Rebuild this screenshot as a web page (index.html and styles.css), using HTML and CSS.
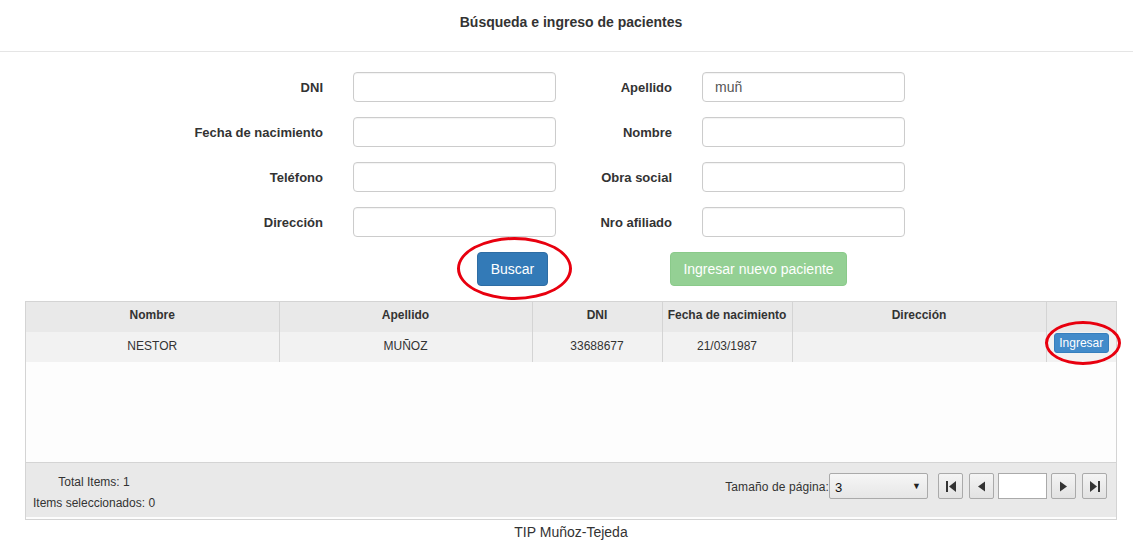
FILE: index.html
```html
<!DOCTYPE html>
<html lang="es">
<head>
<meta charset="utf-8">
<title>Búsqueda e ingreso de pacientes</title>
<link rel="stylesheet" href="styles.css">
</head>
<body>
<header class="top">
  <h1 class="title">Búsqueda e ingreso de pacientes</h1>
</header>

<form class="search">
  <label class="lbl">DNI</label>
  <input class="field" type="text">
  <label class="lbl">Apellido</label>
  <input class="field" type="text" value="muñ">

  <label class="lbl">Fecha de nacimiento</label>
  <input class="field" type="text">
  <label class="lbl">Nombre</label>
  <input class="field" type="text">

  <label class="lbl">Teléfono</label>
  <input class="field" type="text">
  <label class="lbl">Obra social</label>
  <input class="field" type="text">

  <label class="lbl">Dirección</label>
  <input class="field" type="text">
  <label class="lbl">Nro afiliado</label>
  <input class="field" type="text">
</form>

<div class="actions">
  <button class="btn btn-primary" type="button">Buscar</button>
  <button class="btn btn-success" type="button" disabled>Ingresar nuevo paciente</button>
</div>

<section class="grid">
  <table class="grid-table">
    <colgroup>
      <col class="c-nombre"><col class="c-apellido"><col class="c-dni"><col class="c-fecha"><col class="c-dir"><col class="c-act">
    </colgroup>
    <thead>
      <tr class="head-row">
        <th>Nombre</th><th>Apellido</th><th>DNI</th><th>Fecha de nacimiento</th><th>Dirección</th><th></th>
      </tr>
    </thead>
    <tbody>
      <tr class="data-row">
        <td>NESTOR</td><td>MUÑOZ</td><td>33688677</td><td>21/03/1987</td><td></td>
        <td class="act-cell"><button class="btn-row" type="button">Ingresar</button></td>
      </tr>
    </tbody>
  </table>
  <div class="grid-empty"></div>
  <div class="grid-footer">
    <div class="counts">
      <div>Total Items: 1</div>
      <div>Items seleccionados: 0</div>
    </div>
    <div class="pager">
      <span class="pager-label">Tamaño de página:</span>
      <div class="select"><span>3</span><span class="caret">▼</span></div>
      <button class="pg pg-first" type="button"><svg width="12" height="11" viewBox="0 0 12 11"><rect x="1" y="0" width="2" height="11" fill="#333"/><polygon points="11,0 11,11 4,5.5" fill="#333"/></svg></button>
      <button class="pg pg-prev" type="button"><svg width="9" height="11" viewBox="0 0 9 11"><polygon points="8,0.5 8,10.5 1,5.5" fill="#333"/></svg></button>
      <input class="pg-input" type="text">
      <button class="pg pg-next" type="button"><svg width="9" height="11" viewBox="0 0 9 11"><polygon points="1,0.5 1,10.5 8,5.5" fill="#333"/></svg></button>
      <button class="pg pg-last" type="button"><svg width="12" height="11" viewBox="0 0 12 11"><polygon points="1,0 1,11 8,5.5" fill="#333"/><rect x="9" y="0" width="2" height="11" fill="#333"/></svg></button>
    </div>
  </div>
</section>

<footer class="page-foot">TIP Muñoz-Tejeda</footer>

<div class="mark mark-buscar"></div>
<div class="mark mark-row"></div>
</body>
</html>
```

FILE: styles.css
```css
* { box-sizing: border-box; }

html, body {
  margin: 0;
  padding: 0;
  background: #fff;
  font-family: "Liberation Sans", Arial, sans-serif;
  color: #333;
}

body { position: relative; }

.top {
  height: 52px;
  border-bottom: 1px solid #e5e5e5;
  padding: 14px 0 0 9px;
}

.title {
  margin: 0;
  font-size: 14px;
  line-height: 16px;
  font-weight: bold;
  text-align: center;
  color: #333;
}

.search {
  display: grid;
  grid-template-columns: 170px 203px 86px 203px;
  column-gap: 30px;
  row-gap: 15px;
  margin: 20px 0 0 153px;
  align-items: center;
}

.lbl {
  font-size: 13px;
  font-weight: bold;
  text-align: right;
  color: #333;
}

.field {
  height: 30px;
  width: 203px;
  border: 1px solid #ccc;
  border-radius: 4px;
  padding: 0 12px;
  font-family: "Liberation Sans", Arial, sans-serif;
  font-size: 14px;
  color: #555;
  box-shadow: inset 0 1px 1px rgba(0,0,0,0.05);
}

.actions {
  display: flex;
  align-items: center;
  gap: 122px;
  margin: 15px 0 0 477px;
}

.btn {
  height: 34px;
  padding: 0 12px;
  font-family: "Liberation Sans", Arial, sans-serif;
  font-size: 14px;
  border-radius: 4px;
  border: 1px solid transparent;
  color: #fff;
}

.btn-primary {
  width: 71px;
  background: #337ab7;
  border-color: #2e6da4;
}

.btn-success {
  width: 177px;
  background: #5cb85c;
  border-color: #4cae4c;
  opacity: 0.65;
}

.grid {
  margin: 15px 0 0 25px;
  width: 1092px;
  border: 1px solid #d4d4d4;
  background: #fdfdfd;
  padding-bottom: 2px;
}

.grid-table {
  width: 1090px;
  border-collapse: collapse;
  table-layout: fixed;
  font-size: 12px;
}

.c-nombre { width: 253px; }
.c-apellido { width: 253px; }
.c-dni { width: 130px; }
.c-fecha { width: 130px; }
.c-dir { width: 254px; }
.c-act { width: 70px; }

.grid-table th,
.grid-table td {
  border-left: 1px solid #d4d4d4;
  text-align: center;
  padding: 0 4px;
  white-space: nowrap;
}

.grid-table th:first-child,
.grid-table td:first-child { border-left: none; }

.head-row {
  height: 30px;
  background: #e9e9e9;
}

.head-row th {
  font-weight: bold;
  padding-bottom: 5px;
  color: #333;
}

.data-row {
  height: 30px;
  background: #f2f2f2;
}

.data-row td { color: #333; padding-bottom: 2px; }

.grid-table td.act-cell {
  vertical-align: top;
  padding: 1px 0 0;
}

.btn-row {
  width: 55px;
  height: 20px;
  padding: 0;
  background: #428bca;
  border: 1px solid #357ebd;
  border-radius: 3px;
  color: #fff;
  font-family: "Liberation Sans", Arial, sans-serif;
  font-size: 12px;
}

.grid-empty {
  height: 101px;
  border-bottom: 1px solid #d4d4d4;
}

.grid-footer {
  height: 54px;
  background: #e9e9e9;
  display: flex;
  justify-content: space-between;
  align-items: flex-start;
  font-size: 12px;
  color: #333;
}

.counts {
  margin-left: 7px;
  padding-top: 9px;
  line-height: 21px;
  text-align: center;
}

.pager {
  display: flex;
  align-items: center;
  margin-top: 10px;
  margin-right: 9px;
}

.pager-label { padding-top: 2px; letter-spacing: 0.1px; }

.select {
  width: 99px;
  height: 26px;
  border: 1px solid #aaa;
  border-radius: 2px;
  background: linear-gradient(#f6f6f6, #e6e6e6);
  display: flex;
  align-items: center;
  justify-content: space-between;
  padding: 3px 6px 0 5px;
  font-size: 13px;
  color: #111;
  margin-right: 10px;
}

.caret { font-size: 9px; color: #222; padding-bottom: 3px; }

.pg {
  width: 25px;
  height: 26px;
  border: 1px solid #aaa;
  border-radius: 2px;
  background: linear-gradient(#f4f4f4, #e2e2e2);
  padding: 0;
  display: flex;
  align-items: center;
  justify-content: center;
}

.pg-prev { margin-left: 6px; }
.pg-input {
  width: 49px;
  height: 26px;
  margin: 0 4px;
  border: 1px solid #aaa;
  background: #fff;
  padding: 0 4px;
}
.pg-last { margin-left: 6px; }

.page-foot {
  text-align: center;
  font-size: 14px;
  line-height: 20px;
  padding: 2px 0 0 9px;
  color: #333;
}

.mark {
  position: absolute;
  border: 3px solid #e8000f;
  border-radius: 50%;
  pointer-events: none;
}

.mark-buscar {
  left: 457px;
  top: 237px;
  width: 115px;
  height: 63px;
}

.mark-row {
  left: 1045px;
  top: 321px;
  width: 76px;
  height: 44px;
}
```
